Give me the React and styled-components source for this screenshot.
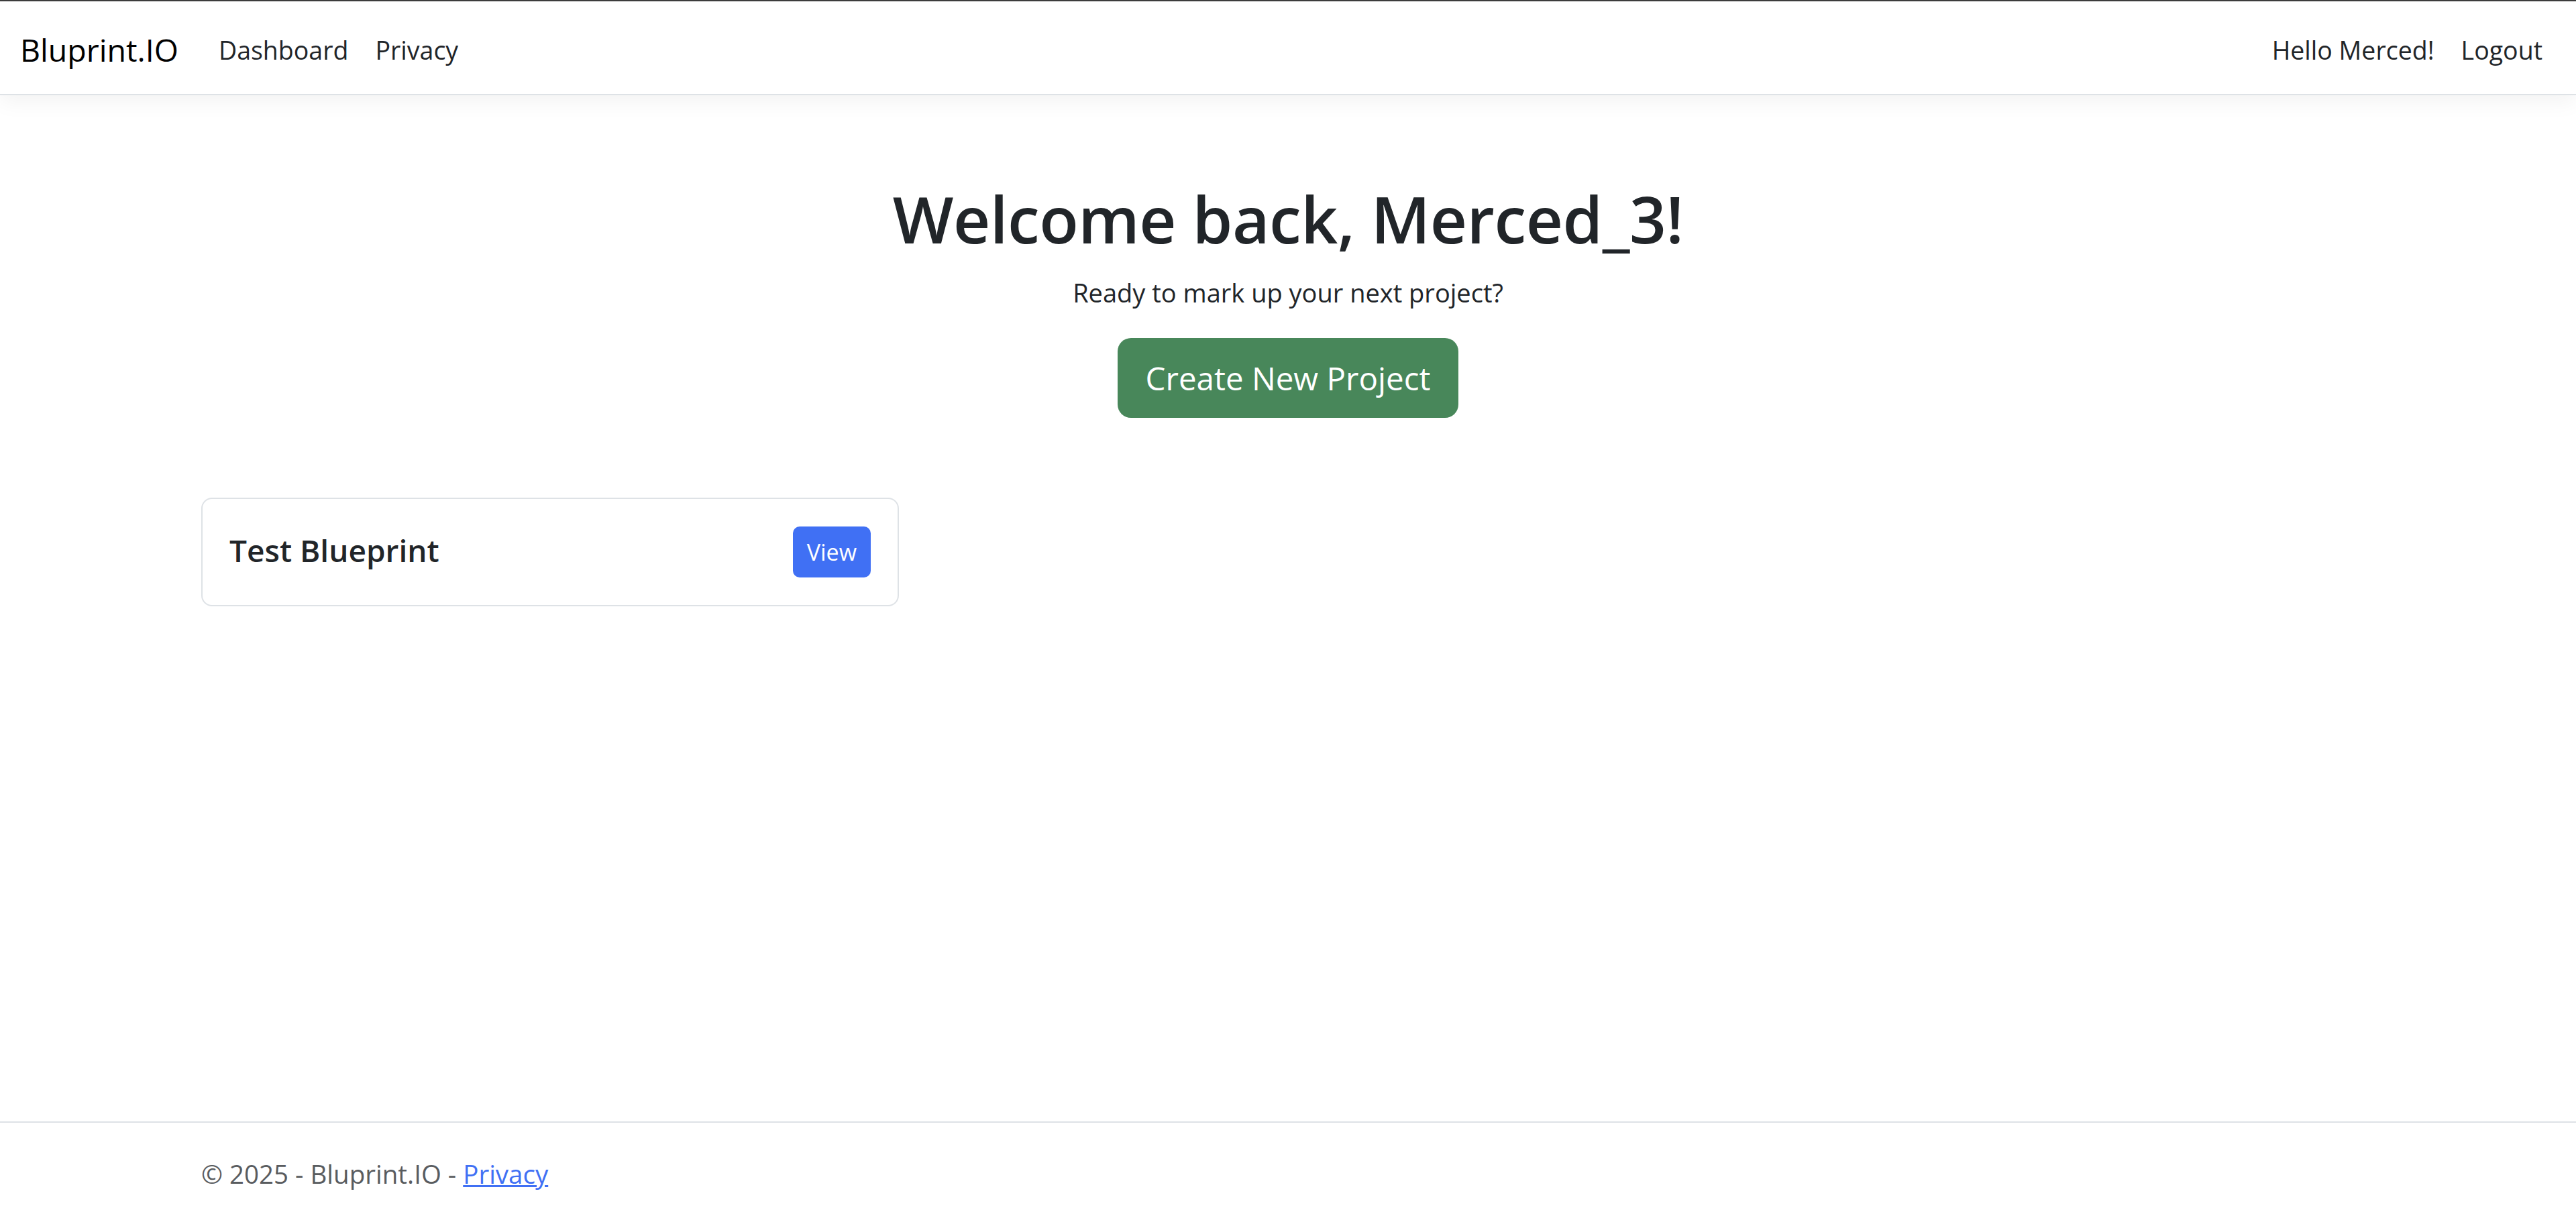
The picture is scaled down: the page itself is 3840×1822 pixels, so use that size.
import React from 'react'
import styled, { createGlobalStyle } from 'styled-components'

const GlobalStyle = createGlobalStyle`
  *, *::before, *::after {
    box-sizing: border-box;
  }

  body {
    margin: 0;
    font-family: 'Open Sans', 'Noto Sans', sans-serif;
    color: #212529;
    background: #fff;
  }
`

const Page = styled.div`
  min-height: 100vh;
  display: flex;
  flex-direction: column;
`

// *---- top navigation ----*
const NavBar = styled.header`
  border-top: 2px solid #3c3c3c;
  border-bottom: 2px solid #dee2e6;
  box-shadow: 0 10px 30px rgba(0, 0, 0, 0.05);
  padding: 23px 30px 15px;
  display: flex;
  align-items: center;
  justify-content: space-between;
  background: #fff;
`

const NavGroup = styled.nav`
  display: flex;
  align-items: center;
`

const Brand = styled.a`
  font-size: 46.5px;
  line-height: 75px;
  padding: 12px 0 13px;
  margin-right: 40px;
  color: #000;
  text-decoration: none;
`

const NavLink = styled.a`
  font-size: 37.5px;
  line-height: 60px;
  padding: 20px;
  color: #212529;
  text-decoration: none;
  cursor: pointer;
`

const Container = styled.div`
  width: 100%;
  max-width: 3300px;
  margin: 0 auto;
  padding: 0 30px;
`

const Main = styled.main`
  flex: 1;
`

// *---- welcome block ----*
const Hero = styled.section`
  text-align: center;
  margin: 124px 0 119px;
`

const Title = styled.h1`
  font-size: 96px;
  font-weight: 600;
  line-height: 120px;
  margin: 0 0 20px;
  letter-spacing: -0.5px;
`

const Lead = styled.p`
  font-size: 38px;
  line-height: 60px;
  margin: 0 0 38px;
`

const Button = styled.a`
  display: inline-block;
  color: #fff;
  background: ${p => p.$variant === 'success' ? '#48875a' : '#4070f4'};
  border: 2px solid transparent;
  text-decoration: none;
  cursor: pointer;
  font-size: ${p => p.$size === 'sm' ? '34px' : '47.5px'};
  line-height: ${p => p.$size === 'sm' ? '52px' : '75px'};
  padding: ${p => p.$size === 'sm' ? '10px 19px' : '20px 40px'};
  border-radius: ${p => p.$size === 'sm' ? '10px' : '20px'};
`

// *---- project cards ----*
const ProjectGrid = styled.div`
  display: grid;
  grid-template-columns: repeat(3, 1fr);
  gap: 60px;
`

const Card = styled.div`
  border: 2px solid #dee2e6;
  border-radius: 16px;
  padding: 41px 40px;
  display: flex;
  align-items: center;
  justify-content: space-between;
`

const CardTitle = styled.h5`
  font-size: 46px;
  font-weight: 600;
  line-height: 60px;
  margin: 0 0 6px;
`

// *---- footer ----*
const Footer = styled.footer`
  border-top: 2px solid #dee2e6;
  height: 150px;
  line-height: 152px;
  font-size: 38.5px;
  color: #595c5f;
  white-space: nowrap;
`

const FooterLink = styled.a`
  color: #4070f4;
  text-decoration: underline;
`

const projects = [{ id: 1, name: 'Test Blueprint' }]

export default function App() {
  return (
    <Page>
      <GlobalStyle />
      <NavBar>
        <NavGroup>
          <Brand href="#">Bluprint.IO</Brand>
          <NavLink href="#">Dashboard</NavLink>
          <NavLink href="#">Privacy</NavLink>
        </NavGroup>
        <NavGroup>
          <NavLink href="#">Hello Merced!</NavLink>
          <NavLink>Logout</NavLink>
        </NavGroup>
      </NavBar>

      <Main>
        <Container>
          <Hero>
            <Title>Welcome back, Merced_3!</Title>
            <Lead>Ready to mark up your next project?</Lead>
            <Button href="#" $variant="success">Create New Project</Button>
          </Hero>

          <ProjectGrid>
            {projects.map(project => (
              <Card key={project.id}>
                <CardTitle>{project.name}</CardTitle>
                <Button href="#" $size="sm">View</Button>
              </Card>
            ))}
          </ProjectGrid>
        </Container>
      </Main>

      <Footer>
        <Container>
          &copy; 2025 - Bluprint.IO - <FooterLink href="#">Privacy</FooterLink>
        </Container>
      </Footer>
    </Page>
  )
}
